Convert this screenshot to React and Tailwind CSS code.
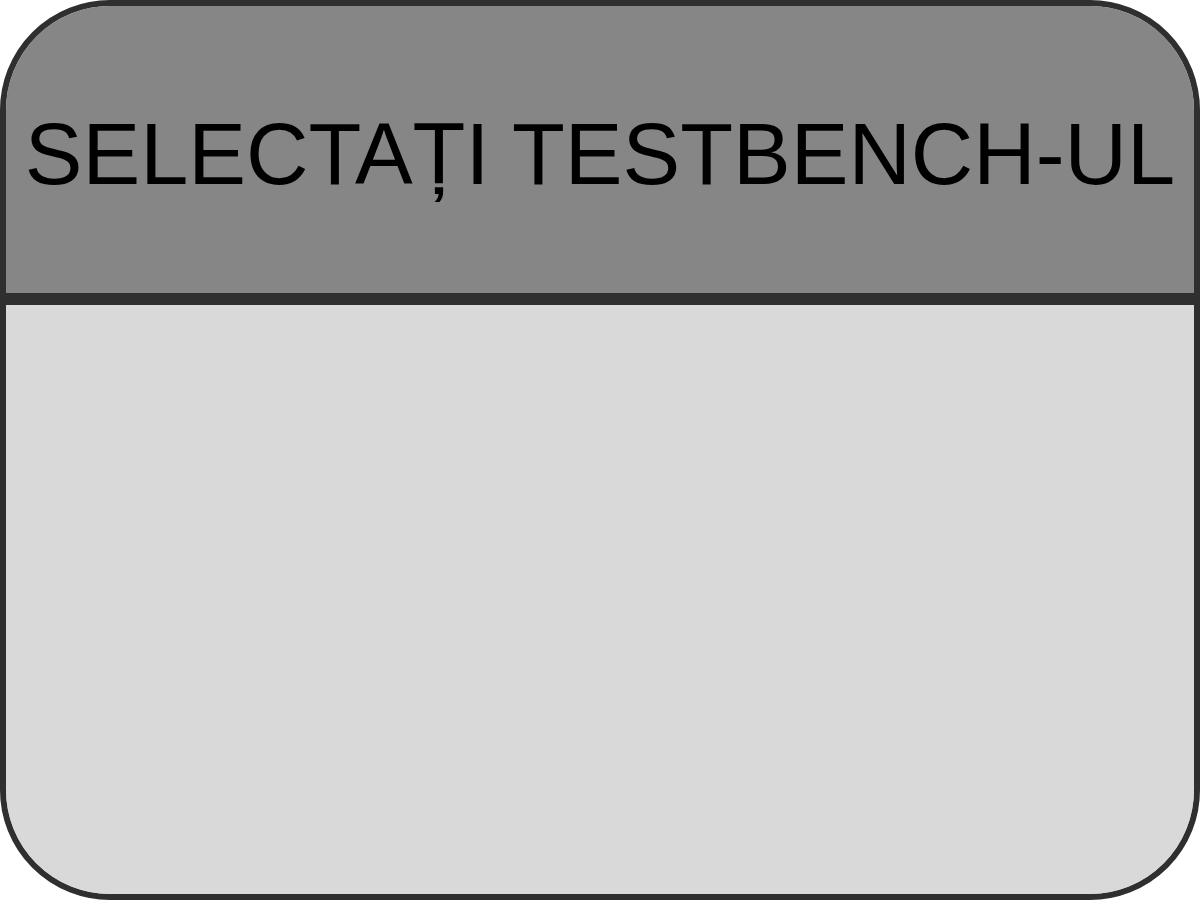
export default function App() {
  return (
    <div className="w-[1200px] h-[900px] bg-white">
      <div className="w-full h-full flex flex-col overflow-hidden rounded-[110px] border-[6px] border-[#2f2f2f] bg-[#d9d9d9]">
        {/* header */}
        <div className="h-[299px] shrink-0 bg-[#868686] border-b-[12px] border-[#2f2f2f] pt-[105px]">
          <h1 className="text-center text-[86.5px] leading-[86px] text-black font-['Liberation_Sans',Arial,sans-serif] whitespace-nowrap">
            SELECTAȚI TESTBENCH-UL
          </h1>
        </div>
        {/* body */}
        <div className="flex-1 bg-[#d9d9d9]"></div>
      </div>
    </div>
  );
}
